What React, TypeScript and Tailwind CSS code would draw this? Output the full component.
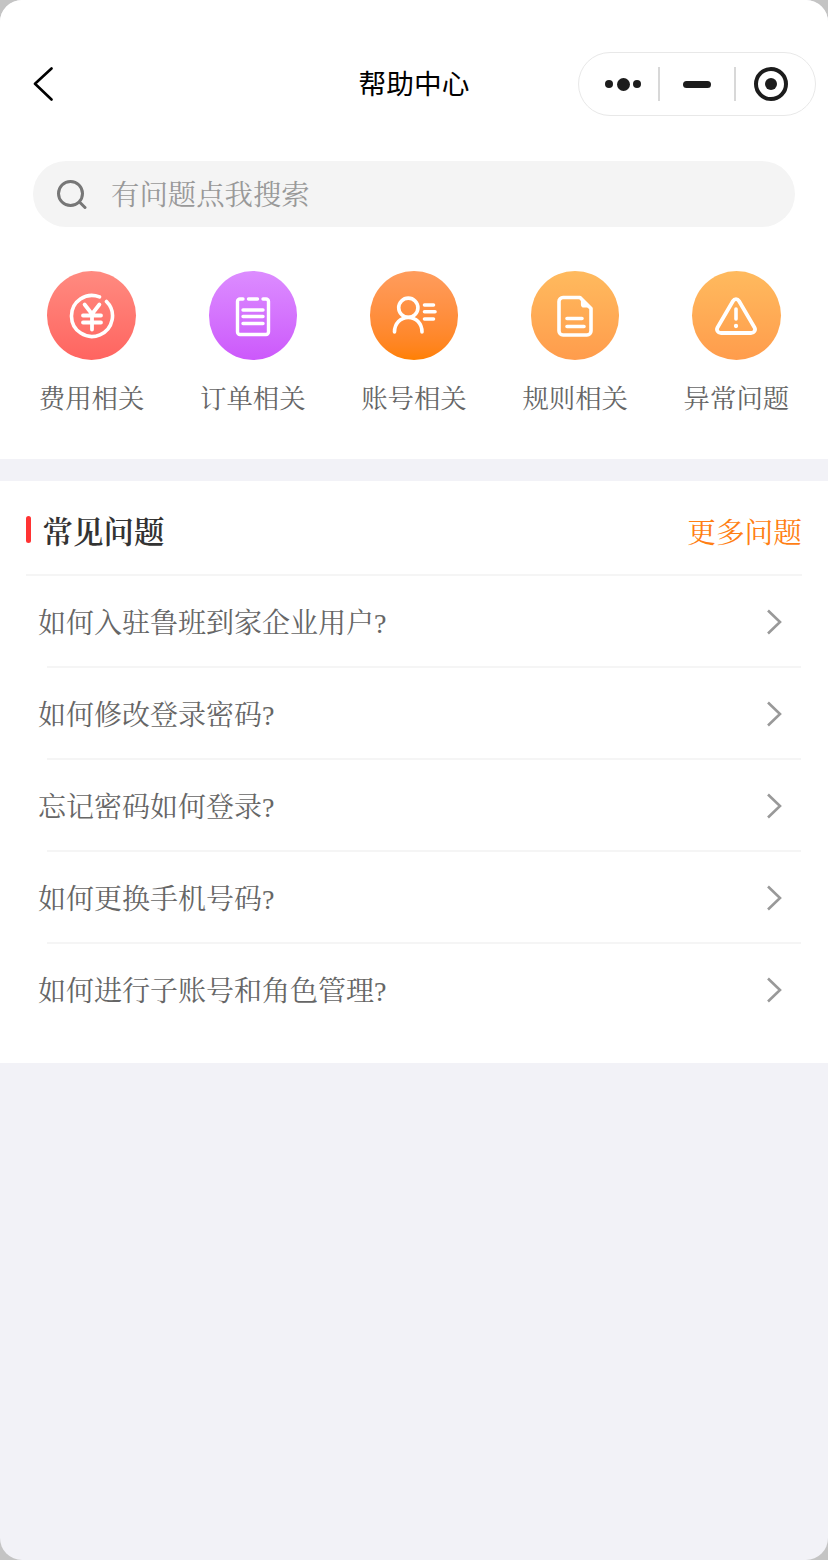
const serif = "font-['Liberation_Serif','Noto_Serif_CJK_SC','Noto_Sans_CJK_SC',serif]";

function Yen() {
  return (
    <svg width="46" height="46" viewBox="0 0 46 46" fill="none" stroke="white" strokeWidth="3.600" strokeLinecap="round" strokeLinejoin="round">
      <path d="M30.500 3.900A20.500 20.500 0 1 0 37.500 8.500" />
      <path d="M15.600 11.500L23 21L30.400 11.500M14 22.500H32M14 29.500H32M23 21V36.500" strokeWidth="3.800" />
    </svg>
  );
}
function Clip() {
  return (
    <svg width="40" height="44" viewBox="0 0 40 44" fill="none" stroke="white" strokeWidth="3.400" strokeLinecap="round" strokeLinejoin="round">
      <path d="M10 5H7A2.500 2.500 0 0 0 4.500 7.500V38A2.500 2.500 0 0 0 7 40.500H33A2.500 2.500 0 0 0 35.500 38V7.500A2.500 2.500 0 0 0 33 5H30" />
      <path d="M15.500 5H24.500M10 16H30M10 22.500H30M10 29.500H30" />
    </svg>
  );
}
function User() {
  return (
    <svg width="46" height="42" viewBox="0 0 46 42" fill="none" stroke="white" strokeWidth="3.600" strokeLinecap="round" strokeLinejoin="round">
      <circle cx="17.300" cy="12.700" r="9.600" />
      <path d="M3.500 37C3.500 28.500 9.500 22.500 17.300 22.500S31 28.500 31 37" />
      <path d="M33.500 10H42.500M33.500 16.700H44M33.500 24H42.500" />
    </svg>
  );
}
function Doc() {
  return (
    <svg width="36" height="42" viewBox="0 0 36 42" fill="none" stroke="white" strokeWidth="3.600" strokeLinecap="round" strokeLinejoin="round">
      <path d="M23 2.500H6A4 4 0 0 0 2 6.500V36A4 4 0 0 0 6 40H30A4 4 0 0 0 34 36V13.500Z" />
      <path d="M25 4V9.500A2 2 0 0 0 27 11.500H32" strokeWidth="2.200" fill="white" />
      <path d="M10 23.500H25M10 31.500H27" />
    </svg>
  );
}
function Warn() {
  return (
    <svg width="42" height="38" viewBox="0 0 42 38" fill="none" stroke="white" strokeWidth="3.800" strokeLinecap="round" strokeLinejoin="round">
      <path d="M18 4L2.500 30.500C1 33 3 36 6 36H36C39 36 41 33 39.500 30.500L24 4C22.500 1.500 19.500 1.500 18 4Z" />
      <path d="M21 12V22" strokeWidth="3.600" />
      <circle cx="21" cy="29" r="1.400" fill="white" strokeWidth="1.500" />
    </svg>
  );
}

const cats = [
  { label: "费用相关", bg: "w-[89px] bg-gradient-to-b from-[#ff8a80] to-[#ff6460]", icon: <Yen /> },
  { label: "订单相关", bg: "w-[88px] bg-gradient-to-b from-[#dc8cff] to-[#cc58fb]", icon: <Clip /> },
  { label: "账号相关", bg: "w-[88px] bg-gradient-to-b from-[#ff9c5c] to-[#ff8000]", icon: <User /> },
  { label: "规则相关", bg: "w-[88px] bg-gradient-to-b from-[#ffba5e] to-[#ff9c4c]", icon: <Doc /> },
  { label: "异常问题", bg: "w-[89px] bg-gradient-to-b from-[#ffba5e] to-[#ff9c4c]", icon: <Warn /> },
];

const faqs = [
  "如何入驻鲁班到家企业用户?",
  "如何修改登录密码?",
  "忘记密码如何登录?",
  "如何更换手机号码?",
  "如何进行子账号和角色管理?",
];

export default function App() {
  return (
    <div className="h-[1560px] w-[828px] bg-[#c4c4c4]">
      <div className={`flex h-full w-full flex-col overflow-hidden rounded-[22px] bg-[#f2f2f7] ${serif}`}>
        <div className="h-[459px] shrink-0 bg-white pt-[52px]">
          <div className="relative flex h-[64px] items-center justify-center">
            <svg className="absolute left-[33px] top-[15px]" width="20" height="34" viewBox="0 0 20 34" fill="none" stroke="black" strokeWidth="2.600" strokeLinecap="round" strokeLinejoin="round">
              <path d="M18.500 1.500L2 16.800L18.500 32.500" />
            </svg>
            <span className="pb-[2px] font-['Noto_Sans_CJK_SC',sans-serif] text-[27.700px] leading-none text-black">帮助中心</span>
            <div className="absolute left-[578px] top-0 flex h-[64px] w-[238px] items-center rounded-full border border-[#e8e8e8] bg-white">
              <div className="flex w-[79px] items-center justify-end gap-[3.500px] pr-[17px]">
                <span className="h-[8px] w-[8px] rounded-full bg-[#1c1c1c]" />
                <span className="h-[13px] w-[13px] rounded-full bg-[#1c1c1c]" />
                <span className="h-[8px] w-[8px] rounded-full bg-[#1c1c1c]" />
              </div>
              <span className="h-[34px] w-[2px] bg-[#d8d8d8]" />
              <div className="flex w-[74px] items-center justify-center">
                <span className="h-[7px] w-[28px] rounded-full bg-[#1c1c1c]" />
              </div>
              <span className="h-[34px] w-[2px] bg-[#d8d8d8]" />
              <div className="flex flex-1 items-center justify-center pr-[9px]">
                <span className="flex h-[34px] w-[34px] items-center justify-center rounded-full border-[4px] border-[#1c1c1c]">
                  <span className="h-[12px] w-[12px] rounded-full bg-[#1c1c1c]" />
                </span>
              </div>
            </div>
          </div>

          <div className="mx-[33px] mt-[45px] flex h-[66px] w-[762px] items-center rounded-full bg-[#f4f4f4] pl-[24px]">
            <svg width="30" height="30" viewBox="0 0 30 30" fill="none" stroke="#777777" strokeWidth="3" strokeLinecap="round">
              <circle cx="13.500" cy="14.500" r="12" />
              <path d="M23.500 24L28 28.500" />
            </svg>
            <span className="ml-[24px] pt-[5px] text-[28.400px] leading-none text-[#999999]">有问题点我搜索</span>
          </div>

          <div className="mt-[44px] grid grid-cols-5 px-[11px]">
            {cats.map((c) => (
              <div key={c.label} className="flex flex-col items-center">
                <div className={`flex h-[89px] items-center justify-center rounded-full ${c.bg}`}>{c.icon}</div>
                <span className="mt-[24px] whitespace-nowrap text-[26.400px] leading-[30px] text-[#666666]">{c.label}</span>
              </div>
            ))}
          </div>
        </div>

        <div className="mt-[22px] h-[582px] shrink-0 bg-white">
          <div className="mx-[26px] flex h-[95px] items-center justify-between border-b-2 border-[#f5f5f5] pt-[4px]">
            <div className="flex items-center">
              <span className="h-[27px] w-[5px] rounded-full bg-[#ff3333]" />
              <span className="ml-[11.500px] pt-[7px] text-[30.500px] font-semibold leading-none text-[#333333]">常见问题</span>
            </div>
            <span className="pt-[8px] text-[28.700px] leading-none text-[#ff7f14]">更多问题</span>
          </div>
          {faqs.map((q, i) => (
            <div key={q} className={`ml-[38px] mr-[27px] flex h-[92px] items-center justify-between ${i < 4 ? "relative after:absolute after:bottom-0 after:left-[9px] after:right-0 after:h-[2px] after:bg-[#f5f5f5]" : ""}`}>
              <span className="pt-[4px] text-[28px] leading-none text-[#666666]">{q}</span>
              <svg className="mr-[19px]" width="16" height="26" viewBox="0 0 16 26" fill="none" stroke="#999999" strokeWidth="2.600">
                <path d="M2 1.500L14 13L2 24.500" />
              </svg>
            </div>
          ))}
        </div>
      </div>
    </div>
  );
}
